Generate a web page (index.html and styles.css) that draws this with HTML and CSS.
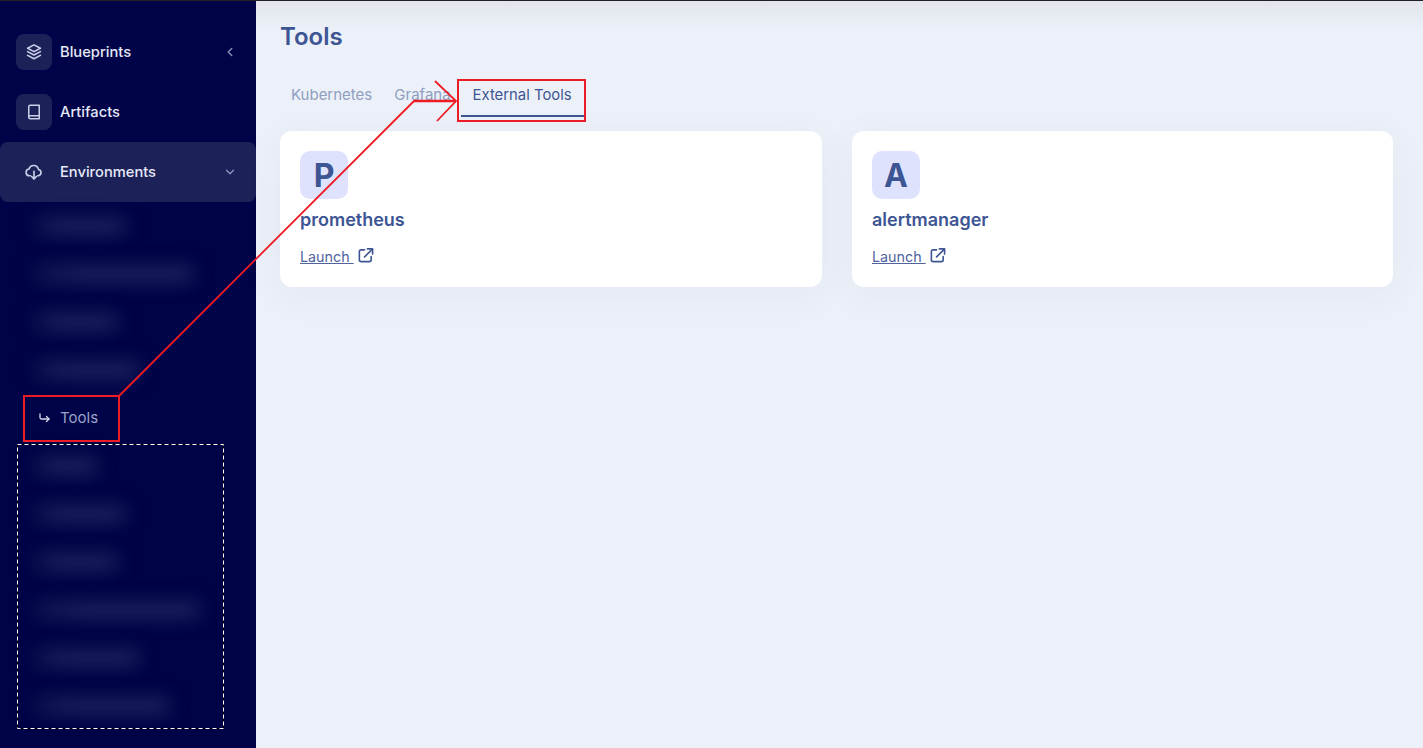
FILE: index.html
```html
<!DOCTYPE html>
<html lang="en">
<head>
<meta charset="utf-8">
<title>Tools</title>
<link rel="stylesheet" href="styles.css">
</head>
<body>
<div class="app">
  <aside class="sidebar">
    <div class="nav-item">
      <span class="nav-icon boxed">
        <svg viewBox="0 0 24 24" width="18" height="18" fill="none" stroke="currentColor" stroke-width="2.200" stroke-linejoin="round" stroke-linecap="round"><path d="M12 2.500l8.500 4.500L12 11.500 3.500 7z"/><path d="M3.500 11.500L12 16l8.500-4.500"/><path d="M3.500 16.500L12 21l8.500-4.500"/></svg>
      </span>
      <span class="nav-label">Blueprints</span>
      <svg class="chev" viewBox="0 0 24 24" width="14" height="14" fill="none" stroke="currentColor" stroke-width="2.400" stroke-linecap="round" stroke-linejoin="round"><path d="M15 6l-6 6 6 6"/></svg>
    </div>
    <div class="nav-item">
      <span class="nav-icon boxed">
        <svg viewBox="0 0 24 24" width="18" height="18" fill="none" stroke="currentColor" stroke-width="2" stroke-linejoin="round" stroke-linecap="round"><path d="M5 19.500V5a2 2 0 0 1 2-2h12v18H7a2 2 0 0 1-2-1.500z"/><path d="M5 19a2 2 0 0 1 2-2h12"/></svg>
      </span>
      <span class="nav-label">Artifacts</span>
    </div>
    <div class="nav-item active">
      <span class="nav-icon">
        <svg viewBox="0 0 24 24" width="18" height="18" fill="none" stroke="currentColor" stroke-width="2.200" stroke-linecap="round" stroke-linejoin="round"><path d="M7 17H6a4.500 4.500 0 0 1-.6-8.960A6.500 6.500 0 0 1 18 8.600 4.300 4.300 0 0 1 18 17h-1"/><path d="M12 11v10"/><path d="M8.800 18L12 21.200 15.200 18"/></svg>
      </span>
      <span class="nav-label">Environments</span>
      <svg class="chev" viewBox="0 0 24 24" width="14" height="14" fill="none" stroke="currentColor" stroke-width="2.400" stroke-linecap="round" stroke-linejoin="round"><path d="M6 9l6 6 6-6"/></svg>
    </div>
    <div class="sub-item"><span class="smudge w-a"></span></div>
    <div class="sub-item"><span class="smudge w-b"></span></div>
    <div class="sub-item"><span class="smudge w-c"></span></div>
    <div class="sub-item"><span class="smudge w-d"></span></div>
    <div class="sub-item tools-item">
      <svg class="sub-arrow" viewBox="0 0 14 14" width="14" height="14" fill="none" stroke="currentColor" stroke-width="1.300" stroke-linecap="round" stroke-linejoin="round"><path d="M2 3v3.500a1.500 1.500 0 0 0 1.500 1.500H11"/><path d="M8.500 5.500L11 8l-2.500 2.500"/></svg>
      <span>Tools</span>
    </div>
    <div class="sub-item"><span class="smudge w-e"></span></div>
    <div class="sub-item"><span class="smudge w-f"></span></div>
    <div class="sub-item"><span class="smudge w-g"></span></div>
    <div class="sub-item"><span class="smudge w-h"></span></div>
    <div class="sub-item"><span class="smudge w-i"></span></div>
    <div class="sub-item"><span class="smudge w-j"></span></div>
  </aside>
  <main class="main">
    <h1 class="title">Tools</h1>
    <nav class="tabs">
      <span class="tab">Kubernetes</span>
      <span class="tab tab-tight">Grafana</span>
      <span class="tab current">External Tools</span>
    </nav>
    <section class="cards">
      <article class="card">
        <div class="avatar">P</div>
        <h2 class="card-name">prometheus</h2>
        <div class="launch-row">
          <a class="launch" href="#">Launch </a>
          <svg class="launch-icon" viewBox="0 0 18 18" width="17" height="17" fill="none" stroke="currentColor" stroke-width="1.700" stroke-linecap="round" stroke-linejoin="round"><path d="M8 3H4.500A2 2 0 0 0 2.500 5v8.500a2 2 0 0 0 2 2H13a2 2 0 0 0 2-2V10"/><path d="M8 10.500L16 2.500"/><path d="M11 2h5.500v5.500"/></svg>
        </div>
      </article>
      <article class="card">
        <div class="avatar">A</div>
        <h2 class="card-name">alertmanager</h2>
        <div class="launch-row">
          <a class="launch" href="#">Launch </a>
          <svg class="launch-icon" viewBox="0 0 18 18" width="17" height="17" fill="none" stroke="currentColor" stroke-width="1.700" stroke-linecap="round" stroke-linejoin="round"><path d="M8 3H4.500A2 2 0 0 0 2.500 5v8.500a2 2 0 0 0 2 2H13a2 2 0 0 0 2-2V10"/><path d="M8 10.500L16 2.500"/><path d="M11 2h5.500v5.500"/></svg>
        </div>
      </article>
    </section>
  </main>
</div>
<div class="top-line"></div>
<svg class="annotations" width="1423" height="748" viewBox="0 0 1423 748" fill="none">
  <rect x="24" y="396" width="95" height="45" stroke="#ed1c24" stroke-width="2"/>
  <rect x="458" y="80" width="127" height="41" stroke="#ed1c24" stroke-width="2"/>
  <path d="M119 396L414 101H456" stroke="#ed1c24" stroke-width="1.800"/>
  <path d="M435 81L456 101L437 121" stroke="#ed1c24" stroke-width="1.800"/>
  <path d="M414 101H456" stroke="#ed1c24" stroke-width="2.500"/>
  <rect x="17.500" y="444.500" width="206" height="284" stroke="#000" stroke-width="1"/>
  <rect x="17.500" y="444.500" width="206" height="284" stroke="#fff" stroke-width="1" stroke-dasharray="4 3"/>
</svg>
</body>
</html>
```
FILE: styles.css
```css
* { box-sizing: border-box; }
html, body { margin: 0; padding: 0; height: 100%; overflow: hidden; }
body { font-family: Inter, "Liberation Sans", sans-serif; background: #ecf0f8; color: #3d5593; }
.app { display: flex; height: 748px; }
.top-line { position: absolute; left: 0; top: 0; width: 1423px; height: 1px; background: #222; }
.annotations { position: absolute; left: 0; top: 0; pointer-events: none; }

.sidebar { width: 256px; flex: none; background: #000347; padding-top: 22px; color: #dfe3f5; }
.nav-item { display: flex; align-items: center; height: 60px; padding: 0 16px; font-size: 14.7px; font-weight: 500; }
.nav-item.active { background: #1c2158; border-radius: 8px; }
.nav-icon { width: 36px; height: 36px; flex: none; display: flex; align-items: center; justify-content: center; border-radius: 8px; margin-right: 8px; color: #c9cfe8; }
.nav-icon.boxed { background: #1c2158; }
.nav-label { flex: 1; color: #e6e9f7; padding-bottom: 1px; }
.chev { color: #8c92bb; margin-right: 3px; }

.sub-item { display: flex; align-items: center; height: 48px; padding-left: 38px; font-size: 15px; color: #9aa3c9; }
.sub-item span { padding-bottom: 1px; }
.sub-arrow { color: #d5daf0; margin-right: 8px; }
.smudge { display: block; height: 16px; margin-left: -4px; padding: 0; background: linear-gradient(90deg, #10144f 0, #1e235c 30%, #1e235c 100%); border-radius: 8px; filter: blur(9px); }
.w-a { width: 92px; }
.w-b { width: 160px; }
.w-c { width: 84px; }
.w-d { width: 106px; }
.w-e { width: 64px; }
.w-f { width: 92px; }
.w-g { width: 84px; }
.w-h { width: 166px; }
.w-i { width: 106px; }
.w-j { width: 136px; }

.main { flex: 1; padding: 0 30px 0 24px; background: linear-gradient(#e2e5ec 0, #ecf0f8 30px); }
.title { margin: 0; padding-top: 22px; height: 64px; font-size: 24px; line-height: 29px; font-weight: 600; color: #3d5593; }
.tabs { display: flex; margin-top: 8px; height: 45px; }
.tab { padding: 12px 11px 0; height: 45px; line-height: 22px; font-size: 15px; color: #8e9fc0; white-space: nowrap; }
.tab-tight { padding-right: 10px; }
.tab.current { color: #3d5593; padding: 12px 12px 0; font-size: 14.85px; border-bottom: 2px solid #3d5593; }

.cards { display: grid; grid-template-columns: 542px 541px; gap: 30px; margin-top: 14px; }
.card { height: 156px; background: #fff; border-radius: 12px; padding: 20px; box-shadow: 0 8px 40px rgba(60, 80, 140, 0.05); }
.avatar { width: 48px; height: 48px; border-radius: 10px; background: #dfe2fc; color: #3d5593; display: flex; align-items: center; justify-content: center; font-size: 32px; font-weight: 700; }
.card-name { margin: 9px 0 0; font-size: 18px; line-height: 24px; font-weight: 600; color: #3d5593; }
.launch-row { display: flex; align-items: flex-start; margin-top: 13px; height: 24px; }
.launch { font-size: 14.3px; line-height: 24px; color: #4f639c; text-decoration: underline; white-space: pre; }
.launch-icon { color: #3d5593; margin-left: 3px; margin-top: 2px; }
```
